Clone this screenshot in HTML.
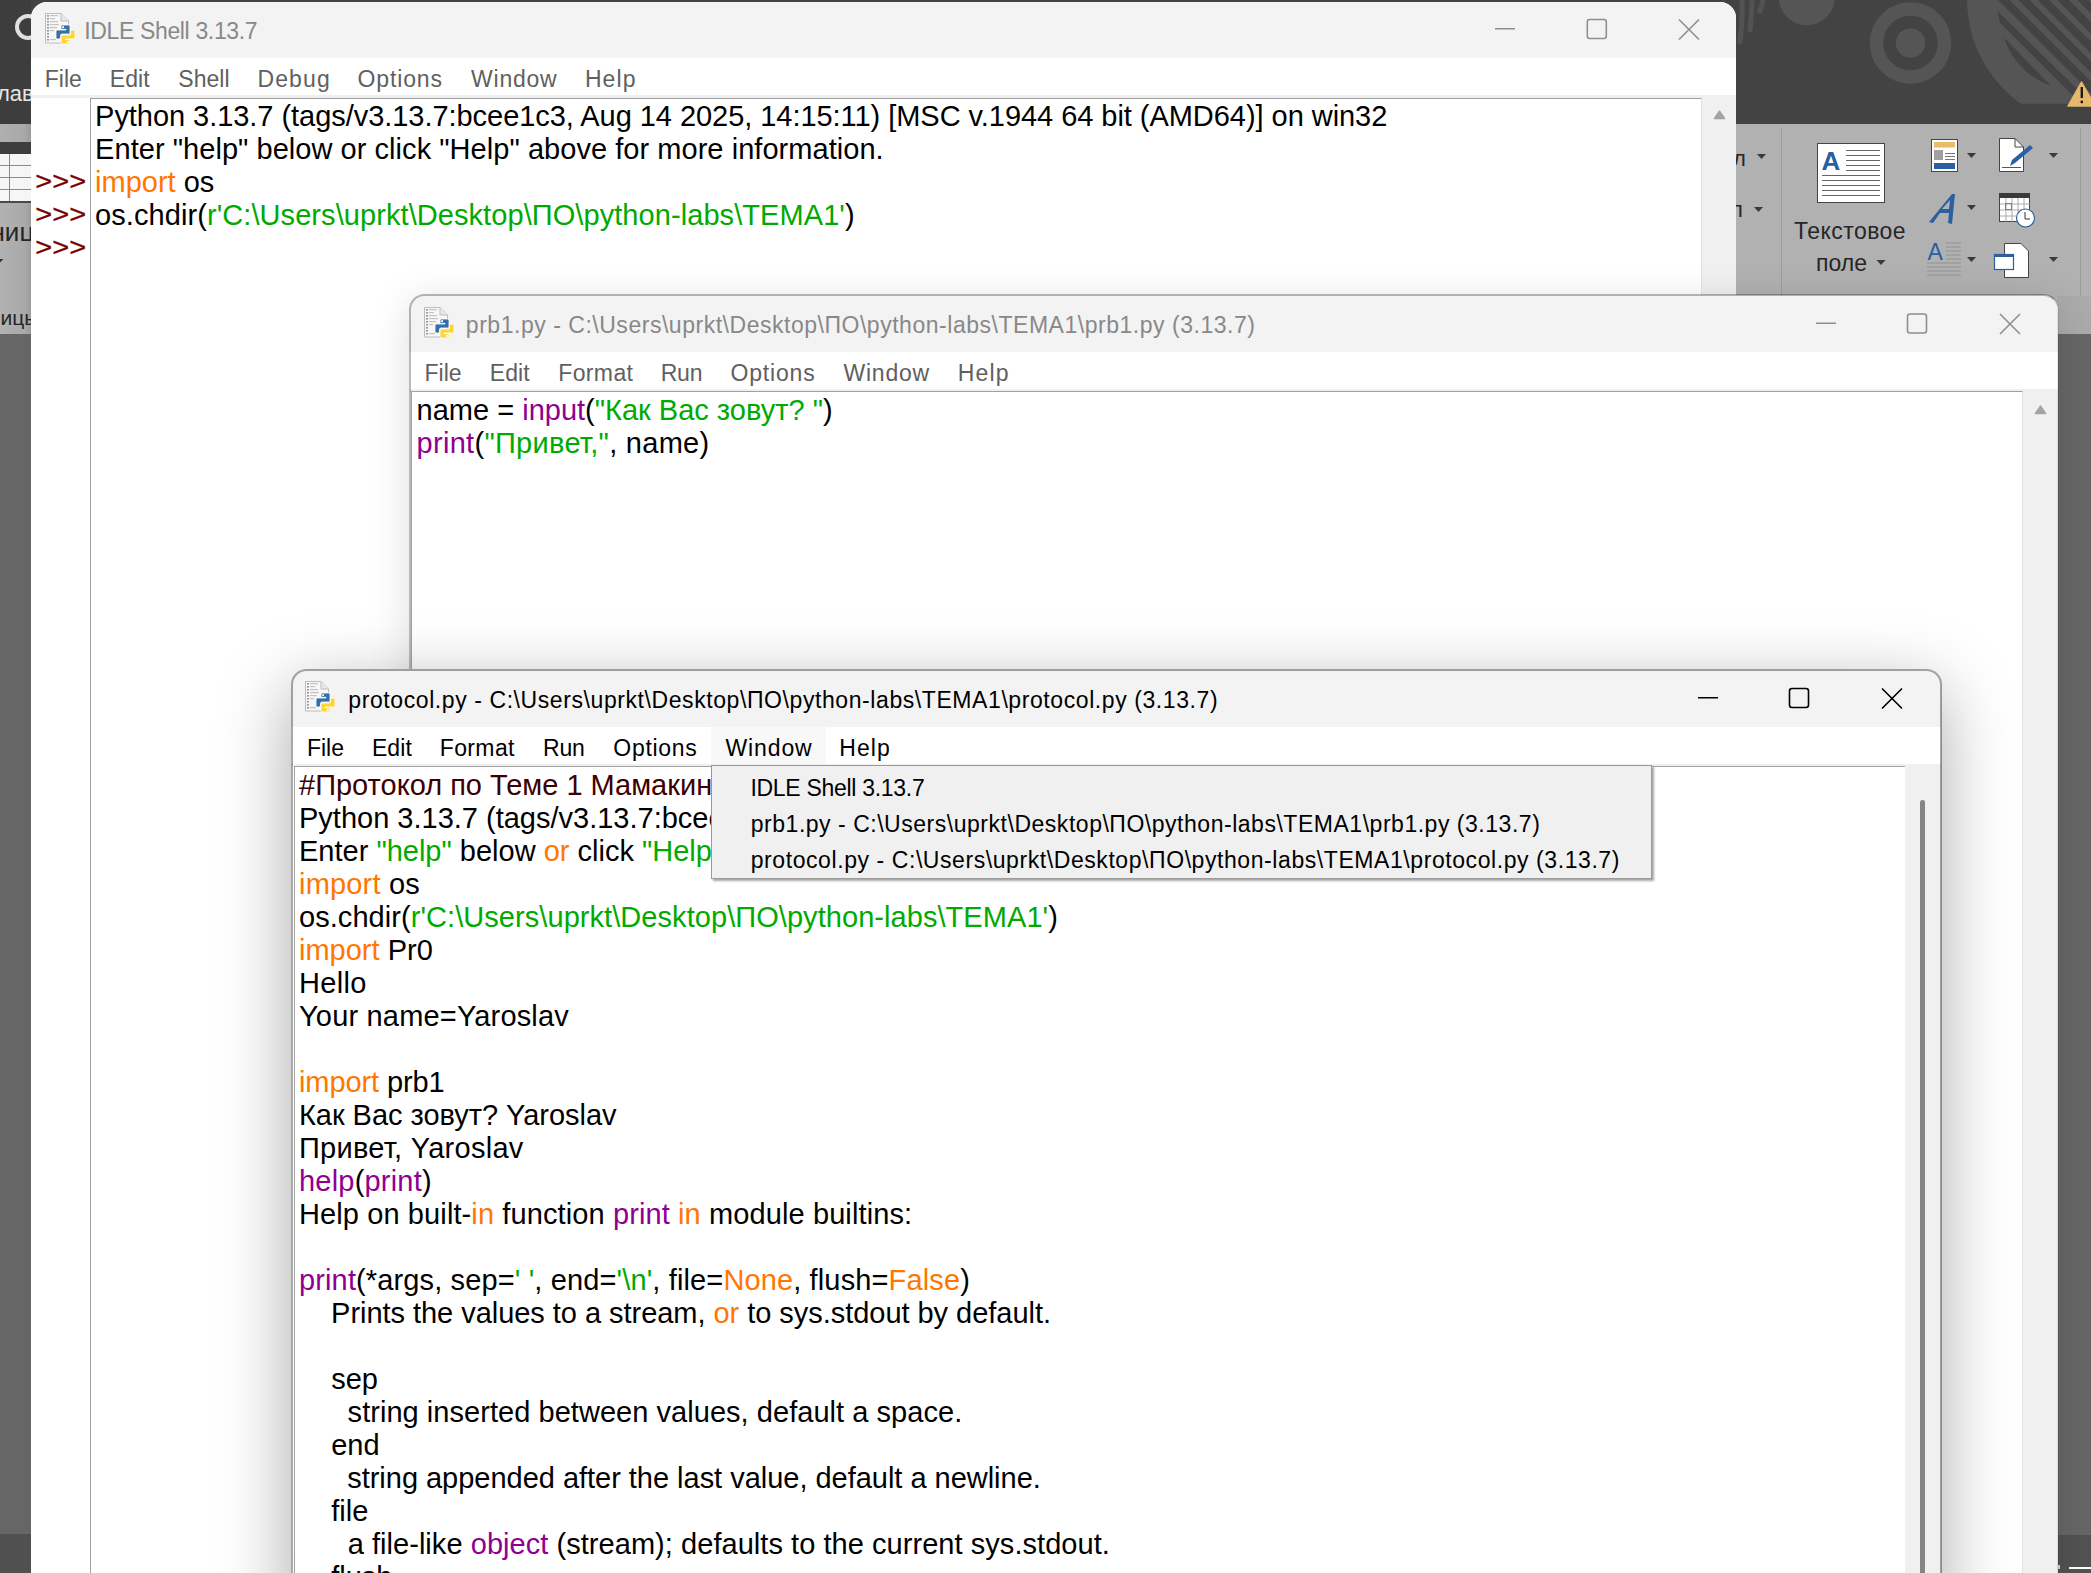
<!DOCTYPE html>
<html><head><meta charset="utf-8">
<style>
*{box-sizing:border-box}
html,body{margin:0;padding:0}
body{width:2091px;height:1573px;position:relative;overflow:hidden;background:#434343;font-family:"Liberation Sans",sans-serif}
.a{position:absolute}
.ui{font-family:"Liberation Sans",sans-serif;white-space:pre;line-height:1}
.code{font-family:"Liberation Sans",sans-serif;font-size:29px;line-height:33px;white-space:pre;color:#000}
.k{color:#ff7700}.s{color:#00aa00}.b{color:#900090}.c{color:#3d0000}.p{color:#770000}
.win{position:absolute;background:#fff;overflow:hidden}
.tb{position:absolute;left:0;right:0;top:0;background:#f3f3f3}
</style></head>
<body>
<!-- ============ BACKGROUND ============ -->
<div id="bg">
  <!-- left strip -->
  <div class="a" style="left:0;top:0;width:31px;height:124px;background:#3d3d3d"></div>
  <div class="a" style="left:0;top:124px;width:31px;height:18px;background:linear-gradient(90deg,#b0b0b0,#a8a8a8 80%,#9a9a9a)"></div>
  <div class="a" style="left:0;top:142px;width:31px;height:12px;background:#3e3e3e"></div>
  <div class="a" style="left:0;top:154px;width:31px;height:48px;background:#f6f6f6"></div>
  <div class="a" style="left:0;top:165px;width:31px;height:1px;background:#8a8a8a"></div>
  <div class="a" style="left:0;top:177px;width:31px;height:1px;background:#8a8a8a"></div>
  <div class="a" style="left:0;top:189px;width:31px;height:1px;background:#8a8a8a"></div>
  <div class="a" style="left:9px;top:154px;width:1px;height:48px;background:#8a8a8a"></div>
  <div class="a" style="left:0;top:201px;width:31px;height:1.5px;background:#4a4a4a"></div>
  <div class="a" style="left:0;top:202.5px;width:31px;height:131.5px;background:linear-gradient(90deg,#b2b2b2,#a9a9a9 80%,#9c9c9c)"></div>
  <div class="a" style="left:0;top:334px;width:31px;height:1200px;background:#666"></div>
  <div class="a" style="left:0;top:1534px;width:31px;height:39px;background:#505050"></div>
  <div class="a" style="left:15px;top:14px;width:26px;height:26px;border:4px solid #e0e0e0;border-radius:50%"></div>
  <div class="a ui" style="left:-3px;top:83px;font-size:22px;color:#e6e6e6">лав</div>
  <div class="a ui" style="left:-9.5px;top:219px;font-size:26px;color:#262626">ниц</div>
  <svg class="a" style="left:0;top:259px" width="4" height="4"><path d="M-3 0 H3.5 L0 3.5Z" fill="#333"/></svg>
  <div class="a ui" style="left:0.5px;top:307px;font-size:21px;color:#262626">ицы</div>

  <!-- top right desktop decoration -->
  <svg class="a" style="left:1736px;top:0" width="355" height="124" viewBox="1736 0 355 124">
    <rect x="1736" y="0" width="355" height="124" fill="#434343"/>
    <circle cx="1806.7" cy="-2.7" r="28" fill="#555555"/>
    <circle cx="1910.5" cy="43" r="34" fill="none" stroke="#555555" stroke-width="13.5"/>
    <circle cx="1910.5" cy="43" r="14.7" fill="#555555"/>
    <clipPath id="bigc"><rect x="1960" y="-10" width="140" height="113.8"/></clipPath>
    <g clip-path="url(#bigc)">
      <circle cx="2095" cy="-0.5" r="128" fill="#555555"/>
      <g stroke="#434343" stroke-width="8.1"><line x1="1993.7" y1="-10" x2="2118.7" y2="115"/><line x1="2014" y1="-10" x2="2139" y2="115"/><line x1="2033.4" y1="-10" x2="2158.4" y2="115"/><line x1="2053" y1="-10" x2="2178" y2="115"/><line x1="2073" y1="-10" x2="2198" y2="115"/></g>
      <g fill="#434343"><path d="M1997.5 11 L2100 111.3 L2100 122.7 L2000 22.7 Z"/><path d="M2004 37.6 L2051 86 Q2016.2 73.1 2004 37.6 Z"/></g>
    </g>
    <g stroke="#525252" stroke-width="5" fill="none" stroke-linecap="round">
      <path d="M1740 42 Q1743 20 1742 -2"/><path d="M1750 30 Q1752 12 1752 -2"/><path d="M1760 11 Q1763 4 1763 -2"/>
    </g>
    <path d="M2081.5 82 L2095 106 L2068 106 Z" fill="#e6b86a" stroke="#e6b86a" stroke-width="1.5" stroke-linejoin="round"/>
    <rect x="2080.6" y="87" width="2.4" height="11" fill="#1e1e1e"/><circle cx="2081.8" cy="102" r="1.4" fill="#1e1e1e"/>
  </svg>

  <!-- Word ribbon right -->
  <div class="a" style="left:1736px;top:124px;width:355px;height:215px;background:#b1b1b1"></div>
  <div class="a" style="left:1781px;top:128px;width:1px;height:168px;background:#9c9c9c"></div>
  <div class="a" style="left:2080px;top:128px;width:1px;height:168px;background:#9c9c9c"></div>
  <div class="a ui" style="left:1733px;top:148px;font-size:22px;color:#262626">л</div>
  <div class="a ui" style="left:1730px;top:199px;font-size:22px;color:#262626">л</div>
  <svg class="a" style="left:1736px;top:124px" width="355" height="172" viewBox="1736 124 355 172">
    <g fill="#3a3a3a">
      <path d="M1757 154 h9 l-4.5 5z"/><path d="M1754 207 h9 l-4.5 5z"/>
      <path d="M1876.5 260 h9 l-4.5 5z"/>
      <path d="M1967 153 h9 l-4.5 5z"/><path d="M2049 153 h9 l-4.5 5z"/>
      <path d="M1967 205 h9 l-4.5 5z"/>
      <path d="M1967 257 h9 l-4.5 5z"/><path d="M2049 257 h9 l-4.5 5z"/>
    </g>
    <!-- text box icon -->
    <rect x="1817.5" y="143.5" width="67" height="59" fill="#fff" stroke="#444" stroke-width="1"/>
    <text x="1821.5" y="170" font-family="Liberation Sans" font-size="26" font-weight="bold" fill="#2b5fa0">A</text>
    <g stroke="#666" stroke-width="1">
      <line x1="1846" y1="150.5" x2="1880" y2="150.5"/><line x1="1846" y1="155.5" x2="1880" y2="155.5"/>
      <line x1="1846" y1="160.5" x2="1880" y2="160.5"/><line x1="1846" y1="165.5" x2="1880" y2="165.5"/>
      <line x1="1846" y1="170.5" x2="1880" y2="170.5"/><line x1="1822" y1="175.5" x2="1880" y2="175.5"/>
      <line x1="1822" y1="180.5" x2="1880" y2="180.5"/><line x1="1822" y1="185.5" x2="1880" y2="185.5"/>
      <line x1="1822" y1="190.5" x2="1880" y2="190.5"/><line x1="1822" y1="195.5" x2="1880" y2="195.5"/>
    </g>
    <!-- quick parts -->
    <rect x="1931.5" y="139.5" width="26" height="32" fill="#fff" stroke="#444"/>
    <rect x="1934" y="142" width="21" height="5.5" fill="#e8bd6a"/>
    <rect x="1934" y="150" width="9" height="10" fill="#a0a0a0"/>
    <rect x="1934" y="163" width="21" height="6" fill="#2b5fa0"/>
    <g stroke="#777" stroke-width="1"><line x1="1945" y1="153.5" x2="1955" y2="153.5"/><line x1="1945" y1="156.5" x2="1955" y2="156.5"/><line x1="1945" y1="159.5" x2="1955" y2="159.5"/></g>
    <!-- signature -->
    <path d="M1999.5 138.5 H2015 L2023.5 147 V171.5 H1999.5 Z" fill="#fff" stroke="#444"/>
    <path d="M2015 138.5 V147 H2023.5" fill="none" stroke="#444"/>
    <line x1="2002" y1="167.5" x2="2021" y2="167.5" stroke="#2b5fa0" stroke-width="1"/>
    <path d="M2010 166 L2012 160 L2030 145 L2033 148 L2015 163 Z" fill="#2b5fa0"/>
    <!-- wordart A -->
    <path d="M1929 222 L1952 194 L1955 194 L1952 224 L1948 223 L1949 213 L1940 213 L1933 223 Z M1942 209 L1949 209 L1950 200 Z" fill="#2b5fa0" fill-rule="evenodd"/>
    <!-- calendar -->
    <rect x="1999.5" y="193.5" width="30" height="28" fill="#fff" stroke="#444"/>
    <rect x="1999" y="193" width="31" height="5" fill="#3a3a3a"/>
    <g stroke="#999" stroke-width="0.8"><line x1="2006" y1="198" x2="2006" y2="222"/><line x1="2012" y1="198" x2="2012" y2="222"/><line x1="2018" y1="198" x2="2018" y2="222"/><line x1="2024" y1="198" x2="2024" y2="222"/><line x1="2000" y1="204" x2="2030" y2="204"/><line x1="2000" y1="210" x2="2030" y2="210"/><line x1="2000" y1="216" x2="2030" y2="216"/></g>
    <rect x="2005.5" y="203.5" width="6" height="6" fill="none" stroke="#d06a20" stroke-width="1"/>
    <circle cx="2025.5" cy="218" r="9" fill="#fff" stroke="#2b5fa0" stroke-width="1.2"/>
    <path d="M2025 212 V219 H2030" fill="none" stroke="#333" stroke-width="1"/>
    <!-- drop cap -->
    <text x="1927.5" y="260" font-family="Liberation Sans" font-size="23" fill="#2b5fa0">A</text>
    <g stroke="#8a8a8a" stroke-width="0.8"><line x1="1946" y1="243" x2="1961" y2="243"/><line x1="1946" y1="247" x2="1961" y2="247"/><line x1="1946" y1="251" x2="1961" y2="251"/><line x1="1946" y1="255" x2="1961" y2="255"/><line x1="1946" y1="259" x2="1961" y2="259"/><line x1="1927" y1="263" x2="1961" y2="263"/><line x1="1927" y1="267" x2="1961" y2="267"/><line x1="1927" y1="271" x2="1961" y2="271"/><line x1="1927" y1="275" x2="1961" y2="275"/></g>
    <!-- object -->
    <path d="M2004.5 243.5 H2021 L2028.5 251 V277.5 H2004.5 Z" fill="#fff" stroke="#444"/>
    <rect x="1994.5" y="254.5" width="19" height="15" fill="#fff" stroke="#2b5fa0" stroke-width="1.2"/>
    <rect x="1994" y="254" width="20" height="3" fill="#2b5fa0"/>
  </svg>
  <div class="a ui" style="left:1794px;top:220px;font-size:23px;color:#262626;letter-spacing:0.45px">Текстовое</div>
  <div class="a ui" style="left:1816px;top:252px;font-size:23px;color:#262626">поле</div>

  <!-- right strip below ribbon -->
  <div class="a" style="left:2057px;top:296px;width:34px;height:38px;background:#ababab"></div>
  <div class="a" style="left:2057px;top:334px;width:34px;height:1201px;background:#666"></div>
  <div class="a" style="left:2057px;top:1535px;width:34px;height:38px;background:#525252"></div>
  <div class="a" style="left:2069px;top:1567px;width:22px;height:2px;background:#fff"></div>
  <div class="a" style="left:2057px;top:1565px;width:3px;height:4px;background:#c8c8c8;z-index:4"></div>
</div>

<!-- ============ SHELL WINDOW ============ -->
<div class="win" style="left:31px;top:2px;width:1705px;height:1600px;border-radius:16px 16px 0 0;z-index:1">
<div class="tb" style="height:56px"></div>
<svg class="a" style="left:10px;top:8px" width="38" height="38" viewBox="0 0 38 38">
<path d="M4.5 3.5H20L27.5 11V33H4.5Z" fill="#f7f7f7" stroke="#bdbdbd"/><path d="M20 3.5V11H27.5" fill="#e8e8e8" stroke="#bdbdbd"/>
<g fill="#9a9a9a"><rect x="6" y="5" width="2" height="1.6"/><rect x="6" y="8" width="2" height="1.6"/><rect x="6" y="11" width="2" height="1.6"/><rect x="6" y="14" width="2" height="1.6"/><rect x="6" y="17" width="2" height="1.6"/><rect x="6" y="20" width="2" height="1.6"/><rect x="6" y="23" width="2" height="1.6"/><rect x="6" y="26" width="2" height="1.6"/><rect x="6" y="29" width="2" height="1.6"/></g>
<g fill="#c4c4c4"><rect x="9" y="5" width="8" height="1.2"/><rect x="9" y="8" width="5" height="1.2"/><rect x="9" y="11" width="8" height="1.2"/><rect x="9" y="14" width="9" height="1.2"/><rect x="9" y="17" width="7" height="1.2"/><rect x="9" y="20" width="4" height="1.2"/><rect x="9" y="29" width="6" height="1.2"/></g>
<g transform="translate(15 15)">
<path d="M6.5 0H12.5Q14 0 14 1.5V7.5Q14 9 12.5 9H6Q4.5 9 4.5 10.5V12.5Q4.5 14 3 14H1.5Q0 14 0 12.5V6.5Q0 5 1.5 5H10V4.3H5V1.5Q5 0 6.5 0Z" fill="#356fa8" stroke="#fff" stroke-width="0.8"/>
<rect x="6.2" y="1.2" width="1.8" height="1.8" fill="#fff"/>
<path d="M6.5 0H12.5Q14 0 14 1.5V7.5Q14 9 12.5 9H6Q4.5 9 4.5 10.5V12.5Q4.5 14 3 14H1.5Q0 14 0 12.5V6.5Q0 5 1.5 5H10V4.3H5V1.5Q5 0 6.5 0Z" transform="rotate(180 9.5 9.5)" fill="#ffd43b" stroke="#fff" stroke-width="0.8"/>
<rect x="11" y="16" width="1.8" height="1.8" fill="#fff"/>
</g></svg>
<div class="a ui" style="left:53.20px;top:18.03px;font-size:23px;color:#888888;letter-spacing:-0.348px">IDLE Shell 3.13.7</div>
<svg class="a" style="left:0;top:0;overflow:visible" width="1" height="1">
<line x1="1464" y1="26.8" x2="1484" y2="26.8" stroke="#8f8f8f" stroke-width="1.6"/>
<rect x="1556.3" y="17.5" width="19" height="19" rx="2.5" fill="none" stroke="#8f8f8f" stroke-width="1.6"/>
<path d="M1648 17.5 l20 20 M1668 17.5 l-20 20" stroke="#8f8f8f" stroke-width="1.6"/>
</svg>
<div class="a ui" style="left:13.70px;top:66.13px;font-size:23px;color:#606060;letter-spacing:0.056px">File</div>
<div class="a ui" style="left:78.70px;top:66.13px;font-size:23px;color:#606060;letter-spacing:0.129px">Edit</div>
<div class="a ui" style="left:147.28px;top:66.13px;font-size:23px;color:#606060;letter-spacing:0.023px">Shell</div>
<div class="a ui" style="left:226.40px;top:66.13px;font-size:23px;color:#606060;letter-spacing:1.128px">Debug</div>
<div class="a ui" style="left:326.62px;top:66.13px;font-size:23px;color:#606060;letter-spacing:0.855px">Options</div>
<div class="a ui" style="left:440.00px;top:66.13px;font-size:23px;color:#606060;letter-spacing:0.783px">Window</div>
<div class="a ui" style="left:553.90px;top:66.13px;font-size:23px;color:#606060;letter-spacing:1.075px">Help</div>
<div class="a" style="left:0;top:93px;width:1705px;height:3px;background:#f0f0f0"></div>
<div class="a" style="left:59px;top:95.5px;width:1612px;height:1600px;border-top:1px solid #a0a0a0;border-left:1px solid #a0a0a0;border-right:1px solid #e3e3e3"></div>
<div class="a" style="left:1671px;top:96px;width:34px;height:1600px;background:#f0f0f0"></div>
<svg class="a" style="left:1682px;top:108px" width="13" height="10" viewBox="0 0 13 10"><path d="M1.5 8.5 L6.5 1.2 L11.5 8.5Z" fill="#a3a3a3" stroke="#a3a3a3" stroke-width="1.6" stroke-linejoin="round"/></svg>
<div class="a code p" style="left:4.2px;top:163.15px;transform:scaleY(0.87);transform-origin:0 18.2px;-webkit-text-stroke:0.35px #770000;letter-spacing:0.1px">&gt;&gt;&gt;</div>
<div class="a code p" style="left:4.2px;top:196.15px;transform:scaleY(0.87);transform-origin:0 18.2px;-webkit-text-stroke:0.35px #770000;letter-spacing:0.1px">&gt;&gt;&gt;</div>
<div class="a code p" style="left:4.2px;top:229.15px;transform:scaleY(0.87);transform-origin:0 18.2px;-webkit-text-stroke:0.35px #770000;letter-spacing:0.1px">&gt;&gt;&gt;</div>
<div class="a code" style="left:64.1px;top:98.05px"><span style="letter-spacing:-0.047px">Python 3.13.7 (tags/v3.13.7:bcee1c3, Aug 14 2025, 14:15:11) [MSC v.1944 64 bit (AMD64)] on win32</span>
<span style="letter-spacing:0.044px">Enter "help" below or click "Help" above for more information.</span>
<span class="k">import</span> os
<span style="letter-spacing:0.073px">os.chdir(<span class="s">r'C:\Users\uprkt\Desktop\ПО\python-labs\TEMA1'</span>)</span></div>
</div>
<!-- ============ PRB1 WINDOW ============ -->
<div class="win" style="left:409px;top:294.5px;width:1649px;height:1300px;border-radius:15px 15px 0 0;z-index:2;box-shadow:0 6px 40px rgba(0,0,0,0.13)">
<div class="tb" style="height:57.5px"></div>
<svg class="a" style="left:11px;top:9.100000000000023px" width="38" height="38" viewBox="0 0 38 38">
<path d="M4.5 3.5H20L27.5 11V33H4.5Z" fill="#f7f7f7" stroke="#bdbdbd"/><path d="M20 3.5V11H27.5" fill="#e8e8e8" stroke="#bdbdbd"/>
<g fill="#9a9a9a"><rect x="6" y="5" width="2" height="1.6"/><rect x="6" y="8" width="2" height="1.6"/><rect x="6" y="11" width="2" height="1.6"/><rect x="6" y="14" width="2" height="1.6"/><rect x="6" y="17" width="2" height="1.6"/><rect x="6" y="20" width="2" height="1.6"/><rect x="6" y="23" width="2" height="1.6"/><rect x="6" y="26" width="2" height="1.6"/><rect x="6" y="29" width="2" height="1.6"/></g>
<g fill="#c4c4c4"><rect x="9" y="5" width="8" height="1.2"/><rect x="9" y="8" width="5" height="1.2"/><rect x="9" y="11" width="8" height="1.2"/><rect x="9" y="14" width="9" height="1.2"/><rect x="9" y="17" width="7" height="1.2"/><rect x="9" y="20" width="4" height="1.2"/><rect x="9" y="29" width="6" height="1.2"/></g>
<g transform="translate(15 15)">
<path d="M6.5 0H12.5Q14 0 14 1.5V7.5Q14 9 12.5 9H6Q4.5 9 4.5 10.5V12.5Q4.5 14 3 14H1.5Q0 14 0 12.5V6.5Q0 5 1.5 5H10V4.3H5V1.5Q5 0 6.5 0Z" fill="#356fa8" stroke="#fff" stroke-width="0.8"/>
<rect x="6.2" y="1.2" width="1.8" height="1.8" fill="#fff"/>
<path d="M6.5 0H12.5Q14 0 14 1.5V7.5Q14 9 12.5 9H6Q4.5 9 4.5 10.5V12.5Q4.5 14 3 14H1.5Q0 14 0 12.5V6.5Q0 5 1.5 5H10V4.3H5V1.5Q5 0 6.5 0Z" transform="rotate(180 9.5 9.5)" fill="#ffd43b" stroke="#fff" stroke-width="0.8"/>
<rect x="11" y="16" width="1.8" height="1.8" fill="#fff"/>
</g></svg>
<div class="a ui" style="left:56.86px;top:19.33px;font-size:23px;color:#888888;letter-spacing:0.525px">prb1.py - C:\Users\uprkt\Desktop\ПО\python-labs\TEMA1\prb1.py (3.13.7)</div>
<svg class="a" style="left:0;top:0;overflow:visible" width="1" height="1">
<line x1="1407" y1="28.19999999999999" x2="1427" y2="28.19999999999999" stroke="#8f8f8f" stroke-width="1.6"/>
<rect x="1498.5" y="19.0" width="19" height="19" rx="2.5" fill="none" stroke="#8f8f8f" stroke-width="1.6"/>
<path d="M1591 19.0 l20 20 M1611 19.0 l-20 20" stroke="#8f8f8f" stroke-width="1.6"/>
</svg>
<div class="a ui" style="left:15.50px;top:67.33px;font-size:23px;color:#606060;letter-spacing:-0.011px">File</div>
<div class="a ui" style="left:80.70px;top:67.33px;font-size:23px;color:#606060;letter-spacing:0.129px">Edit</div>
<div class="a ui" style="left:149.20px;top:67.33px;font-size:23px;color:#606060;letter-spacing:0.395px">Format</div>
<div class="a ui" style="left:251.70px;top:67.33px;font-size:23px;color:#606060;letter-spacing:-0.202px">Run</div>
<div class="a ui" style="left:321.42px;top:67.33px;font-size:23px;color:#606060;letter-spacing:0.839px">Options</div>
<div class="a ui" style="left:434.40px;top:67.33px;font-size:23px;color:#606060;letter-spacing:0.803px">Window</div>
<div class="a ui" style="left:548.80px;top:67.33px;font-size:23px;color:#606060;letter-spacing:1.142px">Help</div>
<div class="a" style="left:0;top:94.5px;width:1649px;height:2.5px;background:#f0f0f0"></div>
<div class="a" style="left:2px;top:96.5px;width:1612px;height:1300px;border-top:1px solid #a0a0a0;border-left:1px solid #a0a0a0;border-right:1px solid #e3e3e3"></div>
<div class="a" style="left:1614px;top:97px;width:35px;height:1300px;background:#f0f0f0"></div>
<svg class="a" style="left:1625px;top:110.5px" width="13" height="10" viewBox="0 0 13 10"><path d="M1.5 8.5 L6.5 1.2 L11.5 8.5Z" fill="#a3a3a3" stroke="#a3a3a3" stroke-width="1.6" stroke-linejoin="round"/></svg>
<div class="a code" style="left:7.6px;top:99.45px">name = <span class="b">input</span>(<span class="s">"Как Вас зовут? "</span>)
<span style="letter-spacing:0.286px"><span class="b">print</span>(<span class="s">"Привет,"</span>, name)</span></div>
</div>
<div class="a" style="left:408.5px;top:294px;width:1650px;height:1300px;border:2px solid rgba(0,0,0,0.27);border-bottom:none;border-right-color:rgba(0,0,0,0.08);border-radius:15.5px 15.5px 0 0;z-index:2"></div>
<!-- ============ PROTOCOL WINDOW ============ -->
<div class="win" style="left:291px;top:669px;width:1650px;height:950px;border-radius:15px 15px 0 0;z-index:3;box-shadow:0 20px 70px rgba(0,0,0,0.34)">
<div class="tb" style="height:58px"></div>
<svg class="a" style="left:10px;top:8.5px" width="38" height="38" viewBox="0 0 38 38">
<path d="M4.5 3.5H20L27.5 11V33H4.5Z" fill="#f7f7f7" stroke="#bdbdbd"/><path d="M20 3.5V11H27.5" fill="#e8e8e8" stroke="#bdbdbd"/>
<g fill="#9a9a9a"><rect x="6" y="5" width="2" height="1.6"/><rect x="6" y="8" width="2" height="1.6"/><rect x="6" y="11" width="2" height="1.6"/><rect x="6" y="14" width="2" height="1.6"/><rect x="6" y="17" width="2" height="1.6"/><rect x="6" y="20" width="2" height="1.6"/><rect x="6" y="23" width="2" height="1.6"/><rect x="6" y="26" width="2" height="1.6"/><rect x="6" y="29" width="2" height="1.6"/></g>
<g fill="#c4c4c4"><rect x="9" y="5" width="8" height="1.2"/><rect x="9" y="8" width="5" height="1.2"/><rect x="9" y="11" width="8" height="1.2"/><rect x="9" y="14" width="9" height="1.2"/><rect x="9" y="17" width="7" height="1.2"/><rect x="9" y="20" width="4" height="1.2"/><rect x="9" y="29" width="6" height="1.2"/></g>
<g transform="translate(15 15)">
<path d="M6.5 0H12.5Q14 0 14 1.5V7.5Q14 9 12.5 9H6Q4.5 9 4.5 10.5V12.5Q4.5 14 3 14H1.5Q0 14 0 12.5V6.5Q0 5 1.5 5H10V4.3H5V1.5Q5 0 6.5 0Z" fill="#356fa8" stroke="#fff" stroke-width="0.8"/>
<rect x="6.2" y="1.2" width="1.8" height="1.8" fill="#fff"/>
<path d="M6.5 0H12.5Q14 0 14 1.5V7.5Q14 9 12.5 9H6Q4.5 9 4.5 10.5V12.5Q4.5 14 3 14H1.5Q0 14 0 12.5V6.5Q0 5 1.5 5H10V4.3H5V1.5Q5 0 6.5 0Z" transform="rotate(180 9.5 9.5)" fill="#ffd43b" stroke="#fff" stroke-width="0.8"/>
<rect x="11" y="16" width="1.8" height="1.8" fill="#fff"/>
</g></svg>
<div class="a ui" style="left:57.36px;top:19.83px;font-size:23px;color:#000;letter-spacing:0.582px">protocol.py - C:\Users\uprkt\Desktop\ПО\python-labs\TEMA1\protocol.py (3.13.7)</div>
<svg class="a" style="left:0;top:0;overflow:visible" width="1" height="1">
<line x1="1407" y1="28.799999999999955" x2="1427" y2="28.799999999999955" stroke="#000" stroke-width="1.6"/>
<rect x="1498.5" y="19.5" width="19" height="19" rx="2.5" fill="none" stroke="#000" stroke-width="1.6"/>
<path d="M1591 19.5 l20 20 M1611 19.5 l-20 20" stroke="#000" stroke-width="1.6"/>
</svg>
<div class="a" style="left:420px;top:58px;width:115px;height:37px;background:#f8f8f8"></div>
<div class="a ui" style="left:15.90px;top:68.03px;font-size:23px;color:#000;letter-spacing:-0.011px">File</div>
<div class="a ui" style="left:80.90px;top:68.03px;font-size:23px;color:#000;letter-spacing:0.129px">Edit</div>
<div class="a ui" style="left:148.70px;top:68.03px;font-size:23px;color:#000;letter-spacing:0.395px">Format</div>
<div class="a ui" style="left:252.00px;top:68.03px;font-size:23px;color:#000;letter-spacing:-0.202px">Run</div>
<div class="a ui" style="left:322.32px;top:68.03px;font-size:23px;color:#000;letter-spacing:0.705px">Options</div>
<div class="a ui" style="left:434.50px;top:68.03px;font-size:23px;color:#000;letter-spacing:0.883px">Window</div>
<div class="a ui" style="left:548.20px;top:68.03px;font-size:23px;color:#000;letter-spacing:1.142px">Help</div>
<div class="a" style="left:0;top:95px;width:1650px;height:2px;background:#f0f0f0"></div>
<div class="a" style="left:2.5px;top:96.5px;width:1612px;height:1300px;border-top:1px solid #a0a0a0;border-left:1px solid #a0a0a0;border-right:1px solid #e3e3e3"></div>
<div class="a" style="left:1614px;top:97px;width:36px;height:1300px;background:#f0f0f0"></div>
<div class="a" style="left:1629.3px;top:131px;width:4.7px;height:1000px;border-radius:2.4px;background:#858585"></div>
<div class="a code" style="left:8.0px;top:99.95px"><span class="c">#Протокол по Теме 1 Мамакин Я.В.</span>
Python 3.13.7 (tags/v3.13.7:bcee1c3, Aug 14 2025, 14:15:11) [MSC v.1944 64 bit (AMD64)] on win32
Enter <span class="s">"help"</span> below <span class="k">or</span> click <span class="s">"Help"</span> above <span class="k">for</span> more information.
<span style="letter-spacing:0.188px"><span class="k">import</span> os</span>
<span style="letter-spacing:0.060px">os.chdir(<span class="s">r'C:\Users\uprkt\Desktop\ПО\python-labs\TEMA1'</span>)</span>
<span class="k">import</span> Pr0
<span style="letter-spacing:0.300px">Hello</span>
<span style="letter-spacing:0.176px">Your name=Yaroslav</span>

<span style="letter-spacing:-0.100px"><span class="k">import</span> prb1</span>
<span style="letter-spacing:-0.036px">Как Вас зовут? Yaroslav</span>
<span style="letter-spacing:0.267px">Привет, Yaroslav</span>
<span style="letter-spacing:0.200px"><span class="b">help</span>(<span class="b">print</span>)</span>
<span style="letter-spacing:0.106px">Help on built-<span class="k">in</span> function <span class="b">print</span> <span class="k">in</span> module builtins:</span>

<span style="letter-spacing:0.130px"><span class="b">print</span>(*args, sep=<span class="s">' '</span>, end=<span class="s">'\n'</span>, file=<span class="k">None</span>, flush=<span class="k">False</span>)</span>
<span style="letter-spacing:-0.039px">    Prints the values to a stream, <span class="k">or</span> to sys.stdout by default.</span>

    sep
<span style="letter-spacing:0.043px">      string inserted between values, default a space.</span>
    end
<span style="letter-spacing:-0.023px">      string appended after the last value, default a newline.</span>
    file
<span style="letter-spacing:0.048px">      a file-like <span class="b">object</span> (stream); defaults to the current sys.stdout.</span>
    flush</div>
</div>
<div class="a" style="left:290.5px;top:668.5px;width:1651px;height:950px;border:2px solid rgba(0,0,0,0.34);border-bottom:none;border-radius:15.5px 15.5px 0 0;z-index:3"></div>
<!-- ============ POPUP ============ -->
<div class="a" style="left:711px;top:765px;width:941px;height:114px;background:#f0f0f0;border:1px solid #9a9a9a;box-shadow:2px 2px 2px rgba(0,0,0,0.35);z-index:5">
<div class="a ui" style="left:38.40px;top:11.43px;font-size:23px;color:#000;letter-spacing:-0.292px">IDLE Shell 3.13.7</div>
<div class="a ui" style="left:38.76px;top:47.03px;font-size:23px;color:#000;letter-spacing:0.525px">prb1.py - C:\Users\uprkt\Desktop\ПО\python-labs\TEMA1\prb1.py (3.13.7)</div>
<div class="a ui" style="left:38.76px;top:82.73px;font-size:23px;color:#000;letter-spacing:0.574px">protocol.py - C:\Users\uprkt\Desktop\ПО\python-labs\TEMA1\protocol.py (3.13.7)</div>
</div>
</body></html>
